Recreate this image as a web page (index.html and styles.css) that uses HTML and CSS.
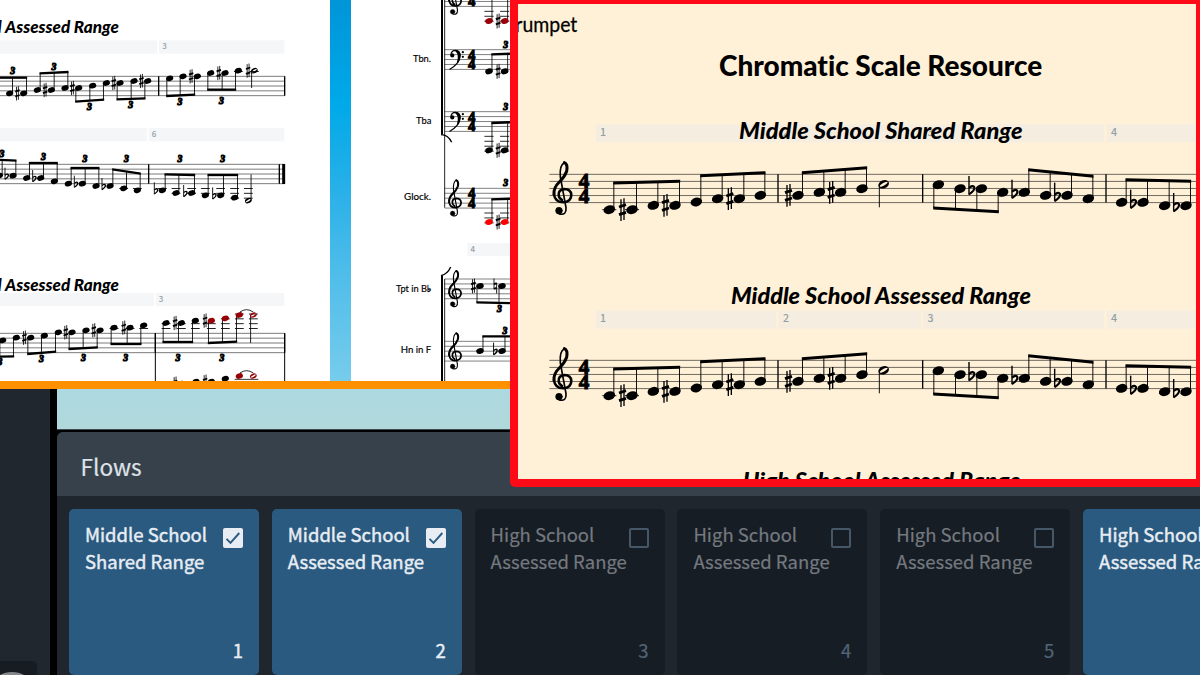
FILE: index.html
```html
<!DOCTYPE html>
<html lang="en">
<head>
<meta charset="utf-8">
<title>Chromatic Scale Resource</title>
<link rel="stylesheet" href="styles.css">
</head>
<body>
<div class="app">
  <section class="pages">
    <div class="page page-left">
      <svg class="sheet" width="330" height="381" viewBox="0 0 990 1143">
        <g id="parts"></g>
        <g class="heading-sm">
          <text x="5" y="100" text-anchor="end">Middle School</text>
          <text x="15" y="100" textLength="342" lengthAdjust="spacingAndGlyphs">Assessed Range</text>
          <text x="5" y="872" text-anchor="end">Middle School</text>
          <text x="15" y="872" textLength="342" lengthAdjust="spacingAndGlyphs">Assessed Range</text>
        </g>
      </svg>
    </div>
    <div class="gutter"></div>
    <div class="page page-score">
      <svg class="sheet" width="159" height="381" viewBox="93 0 477 1143">
        <g id="full"></g>
        <g class="label">
          <text x="279" y="186" textLength="54" lengthAdjust="spacingAndGlyphs">Tbn.</text>
          <text x="288" y="372" textLength="46" lengthAdjust="spacingAndGlyphs">Tba</text>
          <text x="252" y="601" textLength="81" lengthAdjust="spacingAndGlyphs">Glock.</text>
          <text x="228" y="875" textLength="106" lengthAdjust="spacingAndGlyphs">Tpt in B<tspan class="acc">♭</tspan></text>
          <text x="242" y="1059" textLength="92" lengthAdjust="spacingAndGlyphs">Hn in F</text>
        </g>
      </svg>
    </div>
  </section>

  <section class="setup">
    <aside class="rail"><div class="rail-tile"><div class="rail-knob"></div></div></aside>
    <main class="stage">
      <div class="canvas-strip"></div>
      <div class="flows">
        <header class="flows-head">Flows</header>
        <div class="cards">
          <article class="card on"><div class="card-top"><p>Middle School<br>Shared Range</p><i class="check"><svg viewBox="0 0 20 20"><path d="M3.5 10.800l4 4L16.300 5"/></svg></i></div><span class="num">1</span></article>
          <article class="card on"><div class="card-top"><p>Middle School<br>Assessed Range</p><i class="check"><svg viewBox="0 0 20 20"><path d="M3.5 10.800l4 4L16.300 5"/></svg></i></div><span class="num">2</span></article>
          <article class="card"><div class="card-top"><p>High School<br>Assessed Range</p><i class="check"></i></div><span class="num">3</span></article>
          <article class="card"><div class="card-top"><p>High School<br>Assessed Range</p><i class="check"></i></div><span class="num">4</span></article>
          <article class="card"><div class="card-top"><p>High School<br>Assessed Range</p><i class="check"></i></div><span class="num">5</span></article>
          <article class="card on"><div class="card-top"><p>High School<br>Assessed Range</p></div></article>
        </div>
      </div>
    </main>
  </section>

  <section class="inset">
    <svg class="sheet" width="678" height="475" viewBox="24 12 2034 1425">
      <g id="part"></g>
      <text class="part-name" x="-12" y="95" textLength="214" lengthAdjust="spacingAndGlyphs">Trumpet</text>
      <text class="title" x="627" y="228" textLength="970" lengthAdjust="spacingAndGlyphs">Chromatic Scale Resource</text>
      <g class="heading">
        <text x="687" y="416" textLength="851" lengthAdjust="spacingAndGlyphs">Middle School Shared Range</text>
        <text x="663" y="911" textLength="900" lengthAdjust="spacingAndGlyphs">Middle School Assessed Range</text>
        <text x="698" y="1467" textLength="834" lengthAdjust="spacingAndGlyphs">High School Assessed Range</text>
      </g>
    </svg>
  </section>
</div>

<svg class="defs" width="0" height="0">
  <defs>
    <g id="head"><ellipse rx="17.500" ry="13" transform="rotate(-16)"/></g>
    <g id="half"><path fill-rule="evenodd" transform="rotate(-22)" d="M-16.500 0a16.500 12 0 1 0 33 0a16.500 12 0 1 0-33 0M-13.500 1.500C-13 7 12 3 13.500-1.500C13-7-12-3-13.500 1.500"/></g>
    <g id="sharp"><path d="M-4-31V34M5-34V31" stroke-width="4"/><path d="M-10-8L11-15M-10 15L11 8" stroke-width="8.500"/></g>
    <g id="flat"><path d="M-8-38V18" stroke-width="4.200"/><path d="M-8-2Q4-12 8-4Q10 6-8 17" stroke-width="6.500" fill="none"/></g>
    <g id="natural"><path d="M-6-34V14M6-14V34" stroke-width="4"/><path d="M-6-8L6-13M-6 13L6 8" stroke-width="8"/></g>
    <g id="treble" fill="none" stroke-linecap="round">
      <circle cx="20" cy="109" r="10" fill="currentColor" stroke-width="2"/>
      <path d="M21 119Q43 124 41 100L24 8Q21-28 36-35" stroke-width="5"/>
      <path d="M36-35Q47-31 43-9Q37 8 21 23Q3 40 5 60" stroke-width="9"/>
      <path d="M5 60Q8 84 33 84Q57 82 57 61Q55 44 36 44Q18 46 19 62Q20 73 29 77" stroke-width="7.500"/>
    </g>
    <g id="bass">
      <circle cx="20" cy="25" r="9" stroke="none"/>
      <path d="M14 22Q16 3 34 3Q56 4 54 29Q50 62 8 86" fill="none" stroke-width="5"/>
      <path d="M42 6Q62 20 44 55Q55 18 36 5Z" stroke-width="7"/>
      <circle cx="66" cy="11" r="5" stroke="none"/><circle cx="66" cy="31" r="5" stroke="none"/>
    </g>
  </defs>
</svg>
<script src="score.js"></script>
</body>
</html>
```

FILE: styles.css
```css
body { margin: 0; background: #000; overflow: hidden; }
.app {
  position: relative; width: 1200px; height: 675px; overflow: hidden;
  display: flex; flex-direction: column;
  font-family: "Noto Sans CJK SC", "Noto Sans", sans-serif;
}
.defs { position: absolute; }

.pages { display: flex; height: 381px; flex: none; border-bottom: 8px solid #ff9000; background: #fff; }
.page { background: #fff; }
.page-left { width: 330px; }
.page-score { width: 849px; }
.gutter {
  width: 21px;
  background: linear-gradient(#0095d8 0, #00a9e8 27%, #29b0e8 50%, #4cbcea 70%, #77ccec 100%);
}
.sheet { display: block; overflow: hidden; }

.sheet text { font-family: Lato, sans-serif; fill: #000; font-variant-ligatures: none; }
.sheet .bar-no { font-family: "Noto Sans CJK SC", sans-serif; font-weight: 500; fill: #93a0a5; }
.sheet .meter { font-family: "Liberation Serif", serif; font-weight: 700; stroke: #000; stroke-width: 3; text-anchor: middle; }
.sheet .tuplet { font-family: "Liberation Serif", serif; font-weight: 700; font-style: italic; font-size: 29px; stroke: #000; stroke-width: 3.2; text-anchor: middle; }
.sheet .heading-sm text { font-size: 48px; font-weight: 900; font-style: italic; }
.sheet .heading text { font-size: 67px; font-weight: 900; font-style: italic; }
.sheet .title { font-size: 84px; font-weight: 900; }
.sheet .part-name { font-size: 61px; stroke: #000; stroke-width: .8; }
.sheet .label text { font-size: 29px; stroke: #000; stroke-width: .5; }
.sheet .label .acc { font-family: "DejaVu Sans", sans-serif; font-weight: 700; stroke: #000; stroke-width: 1.500; }
.ink { fill: #000; stroke: #000; color: #000; }
.line { stroke: #000; fill: none; }
.line.staff { stroke-opacity: .6; }
.dark { fill: #990006; color: #990006; }
.bright { fill: #f00; color: #f00; }

.setup { display: flex; flex: 1; min-height: 0; }
.rail { width: 50px; background: #20272e; flex: none; display: flex; flex-direction: column; justify-content: flex-end; }
.rail-tile { width: 37px; height: 14px; background: #171b22; border-radius: 0 5px 0 0; overflow: hidden; }
.rail-knob { width: 34px; height: 20px; margin: 11px 0 0 -5px; border-radius: 50%; background: #85898c; }
.stage { flex: 1; min-width: 0; margin-left: 7px; display: flex; flex-direction: column; }
.canvas-strip { height: 40px; flex: none; background: linear-gradient(#acd8df, #b1d9dc); border-bottom: 1px solid #3c4c50; }
.flows { flex: 1; margin-top: 2px; background: #20262d; border-radius: 6px 0 0 0; overflow: hidden; }
.flows-head {
  height: 64px; padding-left: 23.500px; box-sizing: border-box;
  background: #37414c; color: #dfe2e8; font-size: 22.600px; line-height: 69px;
  -webkit-text-stroke: .2px #dfe2e8;
}
.cards { display: flex; gap: 12.800px; padding: 13px 0 0 12px; }
.card {
  width: 190px; height: 165.500px; flex: none; box-sizing: border-box; padding: 12px 16px 11px;
  border-radius: 5px; background: #171d24; color: #747980;
  display: flex; flex-direction: column; justify-content: space-between;
  font-size: 18.500px; line-height: 27px; -webkit-text-stroke: .2px currentColor;
}
.card.on { background: #2a5a80; color: #e8edf3; -webkit-text-stroke-width: .45px; }
.card-top { display: flex; justify-content: space-between; }
.card p { margin: 0; width: 138px; flex: none; white-space: nowrap; }
.check { width: 20px; height: 20px; margin: 7px 0 0; box-sizing: border-box; border: 2px solid #465767; border-radius: 2px; flex: none; }
.on .check { background: #e8edf3; border: 0; }
.check svg { display: block; fill: none; stroke: #2a5a80; stroke-width: 1.900; }
.num { text-align: right; color: #526476; }
.on .num { color: #e8edf3; }

.inset {
  position: absolute; left: 510px; top: 0; width: 678px; height: 474.500px; overflow: hidden;
  border: 4px solid #ff0a16; border-left-width: 8px; border-bottom-width: 8px;
  width: 678px; border-radius: 0 0 0 5px; background: #fff0d8;
}
```

FILE: score.js
```js
// Small engraving helpers: one pixel on the page is three score units.
const NS = 'http://www.w3.org/2000/svg';

function el(parent, tag, attrs, text) {
  const node = document.createElementNS(NS, tag);
  for (const k in attrs) node.setAttribute(k, attrs[k]);
  if (text) node.textContent = text;
  parent.appendChild(node);
  return node;
}

class Staff {
  constructor(root, o) {
    Object.assign(this, { scale: 1, thin: 2.8, beam: 9, accDx: 29 }, o);
    this.g = el(root, 'g', { transform: `translate(0 ${o.dy || 0})` });
    if (o.top === undefined) return;
    for (let i = 0; i < 5; i++) {
      this.path(`M${o.x1} ${o.top + i * o.gap}H${o.x2}`, this.thin, 'line staff');
    }
  }
  path(d, w, cls = 'line') { el(this.g, 'path', { d, class: cls, 'stroke-width': w }); return this; }
  use(id, x, y, s = this.scale, cls = 'ink') {
    el(this.g, 'use', { href: '#' + id, class: cls, transform: `translate(${x} ${y}) scale(${s})` });
    return this;
  }
  bars(...xs) {
    xs.forEach(x => this.path(`M${x} ${this.top}V${this.top + 4 * this.gap}`, 4));
    return this;
  }
  ledgers(x, y) {
    const w = 21 * this.scale, bottom = this.top + 4 * this.gap;
    for (let l = bottom + this.gap; l <= y + 3; l += this.gap) this.path(`M${x - w} ${l}H${x + w}`, this.thin);
    for (let l = this.top - this.gap; l >= y - 3; l -= this.gap) this.path(`M${x - w} ${l}H${x + w}`, this.thin);
  }
  note([x, y, acc, color], head = 'head') {
    if (this.top !== undefined) this.ledgers(x, y);
    el(this.g, 'use', { href: '#' + head, class: color || '', transform: `translate(${x} ${y}) scale(${this.scale})` });
    if (acc) this.use({ s: 'sharp', f: 'flat', n: 'natural' }[acc], x - this.accDx, y);
    return this;
  }
  group(dir, y1, y2, notes, tuplet) {
    const off = dir * 13.5 * this.scale;
    const a = notes[0][0] + off, b = notes[notes.length - 1][0] + off;
    for (const n of notes) {
      const x = n[0] + off;
      this.path(`M${x} ${n[1]}V${y1 + (y2 - y1) * (x - a) / (b - a)}`, this.thin);
      this.note(n);
    }
    const h = this.beam / 2;
    el(this.g, 'path', { d: `M${a - 2} ${y1 - h}L${b + 2} ${y2 - h}V${y2 + h}L${a - 2} ${y1 + h}Z` });
    if (tuplet) this.three(...tuplet);
    return this;
  }
  half(x, y, dir, end, acc, color) {
    const sx = x + dir * 13 * this.scale;
    this.path(`M${sx} ${y}V${end}`, this.thin);
    return this.note([x, y, acc, color], 'half');
  }
  three(x, y) { el(this.g, 'text', { x, y: y + 10, class: 'tuplet' }, '3'); return this; }
  meter(x) {
    const size = this.gap * 2 / .67;
    for (const i of [1, 2]) {
      el(this.g, 'text', { x, y: this.top + i * 2 * this.gap, class: 'meter', 'font-size': size }, '4');
    }
    return this;
  }
}

function measures(root, y, h, fill, size, list) {
  for (const [x1, x2, n] of list) {
    el(root, 'rect', { x: x1, y, width: x2 - x1, height: h, fill });
    if (n) el(root, 'text', { x: x1 + size * .4, y: y + h * .655, class: 'bar-no', 'font-size': size }, n);
  }
}

// Enlarged trumpet part
const part = document.getElementById('part');
for (const dy of [0, 558]) {
  measures(part, dy ? 932 : 373, 54, '#f5eee0', 32,
    [[257, 799, '1'], [806, 1233, '2'], [1240, 1782, '3'], [1790, 2058, '4']]);
  new Staff(part, { dy, x1: 118, x2: 2060, top: 523, gap: 21.2 })
    .use('treble', 127, 523).meter(222).bars(804, 1238, 1788)
    .group(1, 549, 544, [[298, 629], [366, 629, 's'], [430, 616], [495, 616, 's']])
    .group(1, 527, 518, [[559, 606], [623, 596], [688, 596, 's'], [751, 586]])
    .group(1, 518, 503, [[864, 586, 's'], [928, 577], [992, 577, 's'], [1056, 566]])
    .half(1121, 553, -1, 622)
    .group(-1, 624, 635, [[1285, 554], [1350, 566], [1414, 566, 'f'], [1478, 577]])
    .group(1, 509, 529, [[1543, 577, 'f'], [1607, 586], [1671, 586, 'f'], [1735, 596]])
    .group(1, 539, 544, [[1835, 607], [1899, 607, 'f'], [1964, 617], [2028, 617, 'f']]);
}

// Parts at the far left
const parts = document.getElementById('parts');
const small = { scale: .63, thin: 2.6, beam: 7, accDx: 19 };
measures(parts, 121, 40, '#f5f6f8', 24, [[-10, 472], [477, 853, '3']]);
measures(parts, 384, 40, '#f5f6f8', 24, [[-10, 441], [446, 853, '6']]);
measures(parts, 879, 39, '#f5f6f8', 24, [[-10, 462], [467, 853, '3']]);
new Staff(parts, { ...small, x1: 0, x2: 854, top: 229, gap: 14.5 }).bars(476, 854)
  .group(1, 233, 233, [[-12, 286], [29, 280], [71, 280, 's']], [38, 213])
  .group(1, 220, 216, [[112, 270], [154, 270, 's'], [195, 264]], [162, 200])
  .group(-1, 305, 299, [[236, 264, 's'], [278, 257], [319, 249]], [268, 321])
  .group(-1, 298, 295, [[360, 249, 's'], [402, 243], [443, 243, 's']], [392, 315])
  .group(-1, 288, 284, [[509, 235], [549, 229], [592, 229, 's']], [540, 304])
  .group(-1, 269, 269, [[632, 219], [675, 219, 's'], [715, 212]], [664, 303])
  .half(763, 212, -1, 264, 's');
new Staff(parts, { ...small, x1: 0, x2: 854, top: 493, gap: 14.5 }).bars(446, 838)
  .path('M851 492V552', 9)
  .group(1, 478, 482, [[-44, 520], [-2, 527], [39, 527, 'f']], [6, 461])
  .group(1, 489, 489, [[80, 534], [122, 534, 'f'], [163, 544]], [130, 471])
  .group(1, 504, 504, [[205, 551], [247, 551, 'f'], [288, 558]], [255, 477])
  .group(1, 508, 521, [[330, 558, 'f'], [371, 565], [412, 571]], [379, 477])
  .group(1, 523, 525, [[487, 571, 'f'], [528, 579], [575, 579, 'f']], [540, 477])
  .group(1, 525, 525, [[616, 586], [662, 586, 'f'], [704, 593]], [668, 477])
  .half(745, 602, 1, 523);
new Staff(parts, { ...small, dy: 795, x1: 0, x2: 854, top: 205, gap: 14.5 }).bars(466, 854)
  .path('M466 205V350M854 205V350', 3)
  .group(-1, 276, 274, [[-34, 232], [8, 226], [49, 218]], [0, 291])
  .group(-1, 267, 260, [[92, 218, 's'], [133, 212], [175, 202]], [124, 280])
  .group(-1, 252, 247, [[216, 202, 's'], [258, 196], [300, 196, 's']], [250, 279])
  .group(-1, 237, 237, [[342, 188], [390, 188, 's'], [431, 181]], [377, 279])
  .group(-1, 231, 231, [[498, 174], [544, 174, 's'], [586, 167]], [534, 279])
  .group(-1, 234, 230, [[634, 167, 's', 'dark'], [676, 160, '', 'dark'], [718, 150, '', 'dark']], [666, 279])
  .half(760, 150, -1, 234, '', 'dark')
  .path('M720 141Q739 127 760 141', 2.5);
new Staff(parts, { ...small, dy: 795 })
  .path('M704 343H775', 2.4)
  .note([544, 356, 's']).note([588, 350]).note([634, 350, 's']).note([676, 341])
  .note([718, 333, '', 'dark']).note([760, 333, '', 'dark'], 'half')
  .path('M720 324Q739 310 760 324', 2.5);

// Full score
const full = document.getElementById('full');
const mid = { scale: .66, thin: 2.5, beam: 7, accDx: 20, x1: 374, x2: 580, gap: 14.8 };
measures(full, 729, 39, '#f5f6f8', 24, [[442, 580, '4']]);
new Staff(full, mid)
  .path('M366 0V403', 6).path('M374 0V623', 2.6).path('M363 404Q384 404 395 427', 4)
  .path('M366 826V1143', 6).path('M374 837V1143', 2.6).path('M363 827Q383 822 392 801', 4);
new Staff(full, { ...mid, top: -40 }).use('treble', 384, -40, .69).meter(455)
  .group(1, -30, -32, [[507, 63, '', 'dark'], [554, 63, 's', 'dark'], [600, 63]]);
new Staff(full, { ...mid, top: 149 }).use('bass', 383, 149, .69).meter(455)
  .group(1, 163, 160, [[507, 214], [554, 214, 's'], [600, 214]], [557, 134]);
new Staff(full, { ...mid, top: 335 }).use('bass', 383, 335, .69).meter(455)
  .group(1, 369, 365, [[507, 451], [554, 451, 's'], [600, 451]], [557, 321]);
new Staff(full, { ...mid, top: 565 }).use('treble', 384, 565, .69).meter(455)
  .group(1, 598, 595, [[507, 666, '', 'bright'], [554, 666, 's', 'bright'], [600, 666]], [557, 549]);
new Staff(full, { ...mid, dy: 690, top: 147 }).use('treble', 384, 147, .69)
  .group(-1, 217, 220, [[480, 168, 's'], [546, 168, 'n'], [600, 168]], [538, 236]);
new Staff(full, { ...mid, dy: 690, top: 334 }).use('treble', 384, 334, .69)
  .group(1, 319, 319, [[480, 363], [546, 363, 'f'], [600, 363]], [555, 301]);
```
